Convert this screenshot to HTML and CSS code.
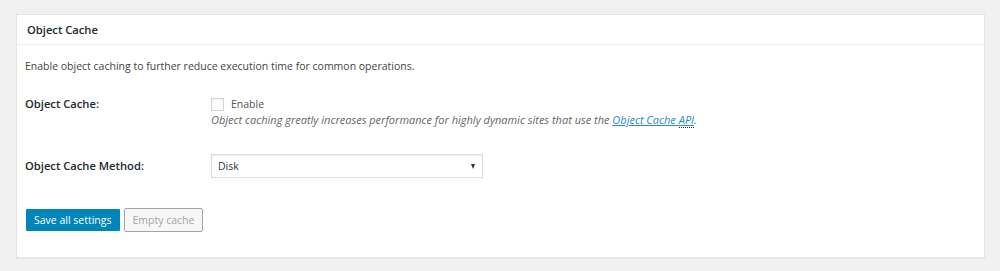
FILE: index.html
```html
<!DOCTYPE html>
<html lang="en">
<head>
  <meta charset="UTF-8" />
  <title>Object Cache</title>
  <link rel="stylesheet" href="styles.css">
</head>
<body>
  <div class="postbox">
    <h3 class="hndle">Object Cache</h3>
    <div class="inside">
      <p class="intro">Enable object caching to further reduce execution time for common operations.</p>
      <div class="form-row first">
        <div class="label">Object Cache:</div>
        <div class="field">
          <label class="check"><span class="box"></span>Enable</label>
          <p class="description">Object caching greatly increases performance for highly dynamic sites that use the <a href="#">Object Cache <abbr>API</abbr></a>.</p>
        </div>
      </div>
      <div class="form-row method">
        <div class="label">Object Cache Method:</div>
        <div class="field">
          <div class="select">Disk<span class="arrow"></span></div>
        </div>
      </div>
      <div class="actions">
        <button class="button-primary">Save all settings</button>
        <button class="button" disabled>Empty cache</button>
      </div>
    </div>
  </div>
</body>
</html>
```

FILE: styles.css
```css
body {
  margin: 0;
  background-color: #f1f1f1;
  font-family: "Open Sans", "Noto Sans", sans-serif;
  font-size: 10.5px;
  color: #444;
  padding: 14px 16px;
}
.postbox {
  background: #fff;
  border: 1px solid #e5e5e5;
  box-shadow: 0 1px 1px rgb(0 0 0 / 0.04);
  width: 969px;
  height: 244px;
  box-sizing: border-box;
}
.hndle {
  margin: 0;
  font-size: 11.2px;
  font-weight: 600;
  color: #23282d;
  padding: 7px 10px;
  line-height: 15px;
  border-bottom: 1px solid #eee;
}
.inside {
  padding: 0 8px;
}
.intro {
  margin: 13px 0 0 0;
  line-height: 16px;
}
.form-row {
  display: grid;
  grid-template-columns: 186px auto;
  align-items: start;
}
.form-row.first {
  margin-top: 22px;
}
.form-row.method {
  margin-top: 26px;
  align-items: center;
}
.label {
  font-size: 11.2px;
  font-weight: 600;
  color: #23282d;
  line-height: 16px;
}
.check {
  display: flex;
  align-items: center;
  gap: 7px;
  line-height: 16px;
  color: #555;
}
.box {
  width: 13px;
  height: 13px;
  border: 1px solid #d4d4d4;
  box-sizing: border-box;
  box-shadow: inset 0 1px 2px rgb(0 0 0 / 0.05);
}
.description {
  margin: 0;
  font-size: 11px;
  font-style: italic;
  color: #666;
  line-height: 16px;
}
.description a {
  color: #2a8bbf;
}
abbr {
  text-decoration: none;
  border-bottom: 1px dotted #23282d;
}
.select {
  width: 272px;
  height: 24px;
  box-sizing: border-box;
  border: 1px solid #ddd;
  box-shadow: inset 0 1px 2px rgb(0 0 0 / 0.07);
  display: flex;
  align-items: center;
  justify-content: space-between;
  padding: 0 7px 0 6px;
  color: #32373c;
}
.arrow {
  width: 0;
  height: 0;
  border-left: 2.5px solid transparent;
  border-right: 2.5px solid transparent;
  border-top: 5px solid #333;
}
.actions {
  display: flex;
  gap: 3px;
  margin-top: 30px;
}
.actions button {
  font-family: inherit;
  font-size: 10.5px;
  height: 24px;
  line-height: 22px;
  padding: 0 8px;
  border-radius: 2px;
  border: 1px solid;
}
.button-primary {
  background: #0085ba;
  border-color: #0073aa #006799 #006799;
  color: #fff;
}
.button {
  background: #f7f7f7;
  border-color: #e2e2e2;
  color: #a0a5aa;
}
```
